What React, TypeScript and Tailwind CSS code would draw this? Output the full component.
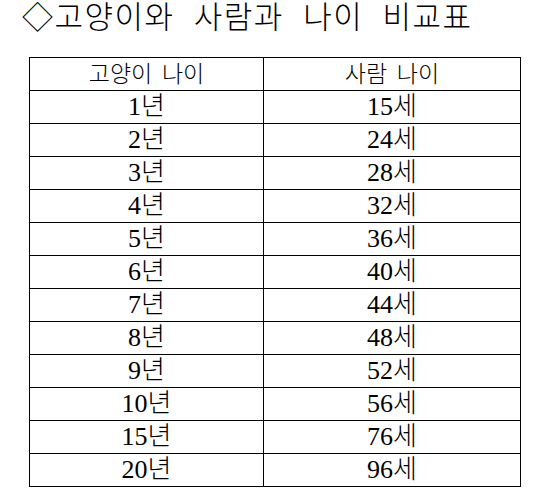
const rows: [string, string][] = [
  ["1년", "15세"],
  ["2년", "24세"],
  ["3년", "28세"],
  ["4년", "32세"],
  ["5년", "36세"],
  ["6년", "40세"],
  ["7년", "44세"],
  ["8년", "48세"],
  ["9년", "52세"],
  ["10년", "56세"],
  ["15년", "76세"],
  ["20년", "96세"],
];

const font = "font-['Liberation_Serif','Noto_Sans_CJK_KR',serif]";

function App() {
  return (
    <div className={`w-[545px] h-[496px] bg-white text-black overflow-hidden ${font}`}>
      {/* Title */}
      <h1 className="pl-[22px] pt-[1px] text-[31px] leading-[34px] font-light tracking-[1.5px] [word-spacing:10px] whitespace-nowrap">
        ◇고양이와 사람과 나이 비교표
      </h1>

      {/* Comparison table */}
      <table className="mt-[22px] ml-[29px] w-[492px] border-collapse border border-black">
        <thead>
          <tr className="h-[33px]">
            <th className="w-[234px] border border-black p-0 text-[23px] leading-none font-light [word-spacing:4px]">
              고양이 나이
            </th>
            <th className="border border-black p-0 text-[23px] leading-none font-light [word-spacing:4px]">
              사람 나이
            </th>
          </tr>
        </thead>
        <tbody>
          {rows.map(([cat, human]) => (
            <tr key={cat} className="h-[33px]">
              <td className="border border-black p-0 text-center text-[26px] leading-none font-light">
                {cat}
              </td>
              <td className="border border-black p-0 text-center text-[26px] leading-none font-light">
                {human}
              </td>
            </tr>
          ))}
        </tbody>
      </table>
    </div>
  );
}

export default App;
